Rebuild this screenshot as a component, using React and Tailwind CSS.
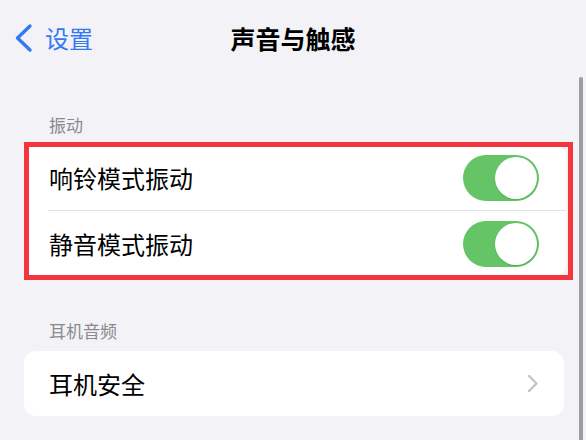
import React from "react";

const CJK = { fontFamily: '"Noto Sans CJK SC", "Noto Sans", sans-serif' };

function Toggle() {
  return (
    <div className="w-[76px] h-[46px] rounded-full bg-[#65c466] p-[2px] flex justify-end">
      <div className="w-[42px] h-[42px] rounded-full bg-white shadow-[0_1px_2px_rgba(0,0,0,0.12)]" />
    </div>
  );
}

function ToggleRow({ label }) {
  return (
    <div className="h-[65px] flex items-center justify-between pl-[25px] pr-[27px]">
      <span className="text-[24px] text-black leading-none">{label}</span>
      <Toggle />
    </div>
  );
}

export default function App() {
  return (
    <div className="relative w-[586px] h-[440px] overflow-hidden bg-[#f2f2f7]" style={CJK}>
      {/* Nav bar */}
      <div className="h-[76px] grid grid-cols-[1fr_auto_1fr] items-center">
        <div className="flex items-center pl-[14px] gap-[12px] text-[#3478f6]">
          <svg width="19" height="30" viewBox="0 0 19 30" fill="none">
            <path d="M16 3 L3.5 15 L16 27" stroke="#3478f6" strokeWidth="3.4" strokeLinecap="round" strokeLinejoin="round" />
          </svg>
          <span className="text-[24px] leading-none">设置</span>
        </div>
        <h1 className="text-[25px] font-bold text-black leading-none">声音与触感</h1>
        <div />
      </div>

      {/* Vibration */}
      <div className="mt-[38px] h-[22px] leading-[22px] text-[17px] text-[#8a8a8e] pl-[49px]">振动</div>
      <div className="relative mt-[9px] ml-[24px] w-[542px]">
        <div className="bg-white rounded-[12px]">
          <ToggleRow label="响铃模式振动" />
          <div className="ml-[24px] h-px bg-[#e2e2e6]" />
          <ToggleRow label="静音模式振动" />
        </div>
        {/* highlight frame */}
        <div className="absolute -top-[3px] -bottom-[4px] left-0 -right-[7px] border-[5px] border-[#f2363b] pointer-events-none" />
      </div>

      {/* Headphone audio */}
      <div className="mt-[44px] h-[22px] leading-[22px] text-[17px] text-[#8a8a8e] pl-[49px]">耳机音频</div>
      <div className="mt-[9px] ml-[24px] w-[540px] h-[65px] bg-white rounded-[12px] flex items-center justify-between pl-[25px] pr-[25px]">
        <span className="text-[24px] text-black leading-none">耳机安全</span>
        <svg width="12" height="19" viewBox="0 0 12 19" fill="none">
          <path d="M2 2 L9.5 9.5 L2 17" stroke="#c4c4c7" strokeWidth="2.4" strokeLinecap="round" strokeLinejoin="round" />
        </svg>
      </div>

      {/* scroll indicator */}
      <div className="absolute left-[579px] top-[77px] w-[4px] h-[380px] rounded-full bg-[#9c9ca1]" />
    </div>
  );
}
